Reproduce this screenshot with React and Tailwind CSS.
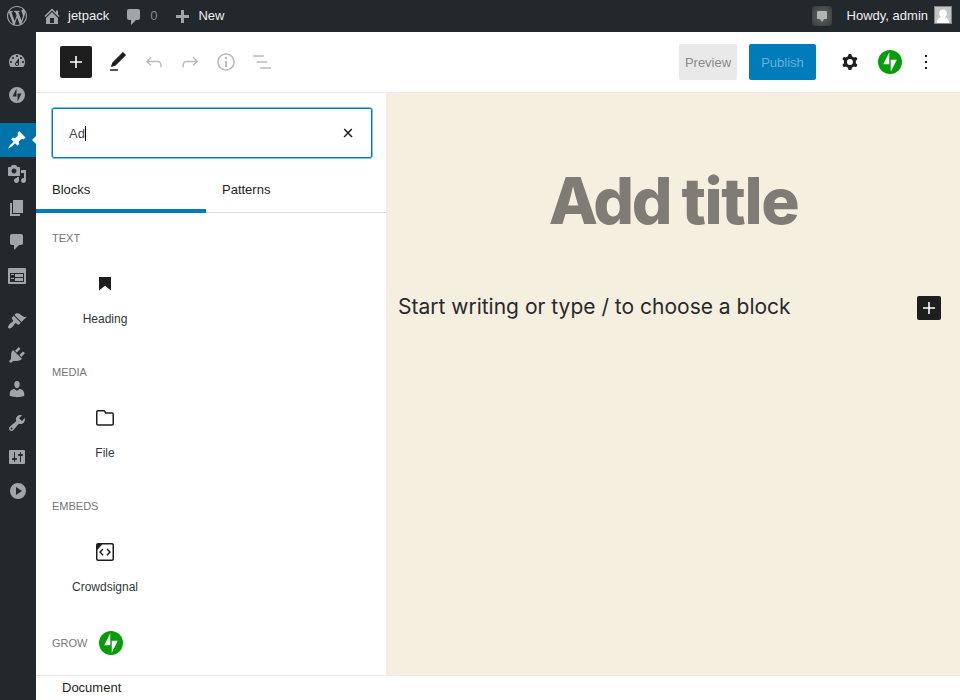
import React from "react";

const DASH = {
  wordpress:
    "M20 10c0-5.51-4.49-10-10-10C4.48 0 0 4.49 0 10c0 5.52 4.48 10 10 10 5.51 0 10-4.48 10-10zM7.78 15.37L4.37 6.22c.55-.02 1.17-.08 1.17-.08.5-.06.44-1.13-.06-1.11 0 0-1.45.11-2.37.11-.18 0-.37 0-.58-.01C4.12 2.69 6.87 1.11 10 1.11c2.33 0 4.45.87 6.05 2.34-.68-.11-1.65.39-1.65 1.58 0 .74.45 1.36.9 2.1.35.61.55 1.36.55 2.46 0 1.49-1.4 5-1.4 5l-3.03-8.37c.54-.02.82-.17.82-.17.5-.05.44-1.25-.06-1.22 0 0-1.44.12-2.38.12-.87 0-2.33-.12-2.33-.12-.5-.03-.56 1.2-.06 1.22l.92.08 1.26 3.41zM17.41 10c.24-.64.74-1.87.43-4.25.7 1.29 1.05 2.71 1.05 4.25 0 3.29-1.73 6.24-4.4 7.78.97-2.59 1.94-5.2 2.92-7.78zM6.1 18.09C3.12 16.65 1.11 13.53 1.11 10c0-1.3.23-2.48.72-3.59C3.25 10.3 4.67 14.2 6.1 18.09zm4.03-6.63l2.58 6.98c-.86.29-1.76.45-2.71.45-.79 0-1.57-.11-2.29-.33.81-2.38 1.62-4.74 2.42-7.1z",
  home: "M16 8.5l1.53 1.53-1.06 1.06L10 4.6l-6.47 6.49-1.06-1.06L10 2.5l4 4v-2h2v4zm-6-2.46l6 5.99V18H4v-5.97zM12 17v-5H8v5h4z",
  comments: "M5 2h9c1.1 0 2 .9 2 2v7c0 1.1-.9 2-2 2h-2l-5 5v-5H5c-1.1 0-2-.9-2-2V4c0-1.1.9-2 2-2z",
  plus: "M17 7v3h-5v5H9v-5H4V7h5V2h3v5h5z",
  dashboard:
    "M3.76 16h12.48c1.1-1.37 1.76-3.11 1.76-5 0-4.42-3.58-8-8-8s-8 3.58-8 8c0 1.89.66 3.63 1.76 5zM10 4c.55 0 1 .45 1 1s-.45 1-1 1-1-.45-1-1 .45-1 1-1zM6 6c.55 0 1 .45 1 1s-.45 1-1 1-1-.45-1-1 .45-1 1-1zm8 0c.55 0 1 .45 1 1s-.45 1-1 1-1-.45-1-1 .45-1 1-1zm-5.37 5.55L12 7v6c0 1.1-.9 2-2 2s-2-.9-2-2c0-.57.24-1.08.63-1.45zM4 10c.55 0 1 .45 1 1s-.45 1-1 1-1-.45-1-1 .45-1 1-1zm12 0c.55 0 1 .45 1 1s-.45 1-1 1-1-.45-1-1 .45-1 1-1zm-5 3c0-.55-.45-1-1-1s-1 .45-1 1 .45 1 1 1 1-.45 1-1z",
  jetpack: "M10 2a8 8 0 1 0 0 16 8 8 0 0 0 0-16zM9.5 11.5h-4l4-8zM10.5 16.5v-8h4z",
  post: "M10.44 3.02l1.82-1.82 6.36 6.35-1.83 1.82c-1.05-.68-2.48-.57-3.41.36l-.75.75c-.92.93-1.04 2.35-.35 3.41l-1.83 1.82-2.41-2.41-2.8 2.79c-.42.42-3.38 2.71-3.8 2.29s1.86-3.39 2.28-3.81l2.79-2.79L4.1 9.36l1.83-1.82c1.05.69 2.48.57 3.4-.36l.75-.75c.93-.92 1.05-2.35.36-3.41z",
  media:
    "M13 11V4c0-.55-.45-1-1-1h-1.67L9 1H5L3.67 3H2c-.55 0-1 .45-1 1v7c0 .55.45 1 1 1h10c.55 0 1-.45 1-1zM7 4.5c1.38 0 2.5 1.12 2.5 2.5S8.38 9.5 7 9.5 4.5 8.38 4.5 7 5.62 4.5 7 4.5zM14 6h5v10.5c0 1.38-1.12 2.5-2.5 2.5S14 17.88 14 16.5s1.12-2.5 2.5-2.5c.17 0 .34.02.5.05V9h-3V6zm-4 8.05V13h2v3.5c0 1.38-1.12 2.5-2.5 2.5S7 17.88 7 16.5 8.12 14 9.5 14c.17 0 .34.02.5.05z",
  page: "M6 15V2h10v13H6zm-1 1h8v2H3V5h2v11z",
  feedback:
    "M2 2h16c.55 0 1 .45 1 1v14c0 .55-.45 1-1 1H2c-.55 0-1-.45-1-1V3c0-.55.45-1 1-1zm15 14V7H3v9h14zM4 8v1h3V8H4zm4 0v3h8V8H8zm-4 4v1h3v-1H4zm4 0v3h8v-3H8z",
  appearance:
    "M14.48 11.06L7.41 3.99l1.5-1.5c.5-.56 2.3-.47 3.51.32 1.21.8 1.43 1.28 2.91 2.1 1.18.64 2.45 1.26 4.45.85zm-.71.71L6.7 4.7 4.93 6.47c-.39.39-.39 1.02 0 1.41l1.06 1.06c.39.39.39 1.03 0 1.42-.6.6-1.43 1.11-2.21 1.69-.35.26-.7.53-1.01.84C1.43 14.23.4 16.08 1.4 17.07c.99 1 2.84-.03 4.18-1.36.31-.31.58-.66.85-1.02.57-.78 1.08-1.61 1.69-2.21.39-.39 1.02-.39 1.41 0l1.06 1.06c.39.39 1.02.39 1.41 0z",
  plugins:
    "M13.11 4.36L9.87 7.6 8 5.73l3.24-3.24c.35-.34 1.05-.2 1.56.32.52.51.66 1.21.31 1.55zm-8 1.77l.91-1.12 9.01 9.01-1.19.84c-.71.71-2.63 1.16-3.82 1.16H6.14L4.9 17.26c-.59.59-1.54.59-2.12 0-.59-.58-.59-1.53 0-2.12l1.24-1.24v-3.88c0-1.13.4-3.19 1.09-3.89zm7.26 3.97l3.24-3.24c.34-.35 1.04-.21 1.55.31.52.51.66 1.21.31 1.55l-3.24 3.25z",
  users:
    "M10 9.25c-2.27 0-2.73-3.44-2.73-3.44C7 4.02 7.82 2 9.97 2c2.16 0 2.98 2.02 2.71 3.81 0 0-.41 3.44-2.68 3.44zm0 2.57L12.72 10c2.39 0 4.52 2.33 4.52 4.53v2.49s-3.65 1.13-7.24 1.13c-3.65 0-7.24-1.13-7.24-1.13v-2.49c0-2.25 1.94-4.48 4.47-4.48z",
  tools:
    "M16.68 9.77c-1.34 1.34-3.3 1.67-4.95.99l-5.41 6.52c-.99.99-2.59.99-3.58 0s-.99-2.59 0-3.57l6.52-5.42c-.68-1.65-.35-3.61.99-4.95 1.28-1.28 3.12-1.62 4.72-1.06l-2.89 2.89 2.82 2.82 2.86-2.87c.53 1.58.18 3.39-1.08 4.65zM3.81 16.21c.4.39 1.04.39 1.43 0 .4-.4.4-1.04 0-1.43-.39-.4-1.03-.4-1.43 0-.39.39-.39 1.03 0 1.43z",
  settings:
    "M18 16V4c0-.55-.45-1-1-1H3c-.55 0-1 .45-1 1v12c0 .55.45 1 1 1h14c.55 0 1-.45 1-1zM8 11h1c.55 0 1 .45 1 1s-.45 1-1 1H8v1.5c0 .28-.22.5-.5.5s-.5-.22-.5-.5V13H6c-.55 0-1-.45-1-1s.45-1 1-1h1V5.5c0-.28.22-.5.5-.5s.5.22.5.5V11zm5-2h-1c-.55 0-1-.45-1-1s.45-1 1-1h1V5.5c0-.28.22-.5.5-.5s.5.22.5.5V7h1c.55 0 1 .45 1 1s-.45 1-1 1h-1v5.5c0 .28-.22.5-.5.5s-.5-.22-.5-.5V9z",
  collapse: "M10 2a8 8 0 1 0 0 16 8 8 0 0 0 0-16zM8 6l6 4-6 4z",
};

const ED = {
  plus: "M18 11.2h-5.2V6h-1.6v5.2H6v1.6h5.2V18h1.6v-5.2H18z",
  edit: "M20.1 5.1L16.9 2 6.2 12.7l-1.3 4.4 4.5-1.3L20.1 5.1zM4 20.8h8v-1.5H4v1.5z",
  undo: "M18.3 11.7c-.6-.6-1.4-.9-2.3-.9H6.7l2.9-3.3-1.1-1-4.5 5L8.5 16l1-1-2.7-2.7H16c.5 0 .9.2 1.3.5 1 1 1 3.4 1 4.5v.3h1.5v-.2c0-1.5 0-4.3-1.5-5.7z",
  redo: "M15.6 6.5l-1.1 1 2.9 3.3H8c-.9 0-1.7.3-2.3.9-1.4 1.5-1.4 4.2-1.4 5.6v.2h1.5v-.3c0-1.1 0-3.5 1-4.5.3-.3.7-.5 1.3-.5h9.2L14.5 15l1.1 1.1 4.6-4.6-4.6-5z",
  info: "M12 3.2c-4.8 0-8.8 3.9-8.8 8.8 0 4.8 3.9 8.8 8.8 8.8 4.8 0 8.8-3.9 8.8-8.8 0-4.8-4-8.8-8.8-8.8zm0 16c-4 0-7.2-3.3-7.2-7.2C4.8 8 8 4.8 12 4.8s7.2 3.3 7.2 7.2c0 4-3.2 7.2-7.2 7.2zM11 17h2v-6h-2v6zm0-8h2V7h-2v2z",
  list: "M13.8 5.2H3v1.5h10.8V5.2zm-3.6 12v1.5H21v-1.5H10.2zm7.2-6H6.6v1.5h10.8v-1.5z",
  cog: "M10.289 4.836A1 1 0 0111.275 4h1.306a1 1 0 01.987.836l.244 1.466c.787.26 1.503.679 2.108 1.218l1.393-.522a1 1 0 011.216.437l.653 1.13a1 1 0 01-.23 1.273l-1.148.944a6.025 6.025 0 010 2.435l1.149.946a1 1 0 01.23 1.272l-.653 1.13a1 1 0 01-1.216.437l-1.394-.522c-.605.54-1.32.958-2.108 1.218l-.244 1.466a1 1 0 01-.987.836h-1.306a1 1 0 01-.986-.836l-.244-1.466a5.995 5.995 0 01-2.108-1.218l-1.394.522a1 1 0 01-1.217-.436l-.653-1.131a1 1 0 01.23-1.272l1.149-.946a6.026 6.026 0 010-2.435l-1.148-.944a1 1 0 01-.23-1.272l.653-1.131a1 1 0 011.217-.437l1.393.522a5.994 5.994 0 012.108-1.218l.244-1.466zM14.929 12a3 3 0 11-6 0 3 3 0 016 0z",
  more: "M13 19h-2v-2h2v2zm0-6h-2v-2h2v2zm0-6h-2V5h2v2z",
  close: "M13 11.9l3.3-3.4-1.1-1-3.2 3.3-3.2-3.3-1.1 1 3.3 3.4-3.5 3.6 1 1L12 13l3.5 3.5 1.1-1z",
  heading: "M6 5V18.5911L12 13.8473L18 18.5911V5H6Z",
  file: "M19 6.2h-5.9l-.6-1.1c-.3-.7-1-1.1-1.8-1.1H5c-1.1 0-2 .9-2 2v11.8c0 1.1.9 2 2 2h14c1.1 0 2-.9 2-2V8.2c0-1.1-.9-2-2-2zm.5 11.6c0 .3-.2.5-.5.5H5c-.3 0-.5-.2-.5-.5V6c0-.3.2-.5.5-.5h5.8c.2 0 .4.1.4.3l1 1.9H19c.3 0 .5.2.5.5v9.6z",
  embed:
    "M19 3H5c-1.1 0-2 .9-2 2v14c0 1.1.9 2 2 2h14c1.1 0 2-.9 2-2V5c0-1.1-.9-2-2-2zm.5 16c0 .3-.2.5-.5.5H5c-.3 0-.5-.2-.5-.5V9.8l4.7-5.3H19c.3 0 .5.2.5.5v14zm-6-9.5L16 12l-2.5 2.8 1.1 1L18 12l-3.5-3.5-1 1zm-3 0l-1-1L6 12l3.5 3.8 1.1-1L8 12l2.5-2.5z",
};

function Dash({ name, className = "" }) {
  return (
    <svg viewBox="0 0 20 20" className={`size-5 shrink-0 fill-current ${className}`} fillRule="evenodd">
      <path d={DASH[name]} />
    </svg>
  );
}

function Ed({ name, className = "" }) {
  return (
    <svg viewBox="0 0 24 24" className={`size-6 shrink-0 fill-current ${className}`} fillRule="evenodd">
      <path d={ED[name]} />
    </svg>
  );
}

function JetpackLogo() {
  return (
    <svg viewBox="0 0 32 32" className="size-6 shrink-0">
      <circle cx="16" cy="16" r="16" fill="#069e08" />
      <path fill="#fff" d="M15 19H7l8-16zM17 29V13h8z" />
    </svg>
  );
}

function AdminBar() {
  return (
    <header className="flex h-8 shrink-0 items-center bg-[#23282d] text-[#eee]">
      <Dash name="wordpress" className="ml-[7px] text-[#a0a5aa]" />
      <Dash name="home" className="ml-[15px] text-[#a0a5aa]" />
      <span className="ml-1.5">jetpack</span>
      <Dash name="comments" className="ml-[15px] mt-0.5 text-[#a0a5aa]" />
      <span className="ml-[6px] text-[#84898d]">0</span>
      <Dash name="plus" className="ml-[15px] mt-[3px] text-[#a0a5aa]" />
      <span className="ml-[6px]">New</span>
      <span className="ml-auto mr-[15px] flex size-5 items-center justify-center rounded-[3px] bg-[radial-gradient(circle,#6a6a6a_0%,#545454_40%,#34373a_100%)]">
        <svg viewBox="0 0 10 11" className="h-[11px] w-2.5 fill-[#b4b4b4]">
          <path d="M1 0h8a1 1 0 0 1 1 1v6a1 1 0 0 1-1 1H7l-2 3-2-3H1a1 1 0 0 1-1-1V1a1 1 0 0 1 1-1z" />
        </svg>
      </span>
      <span>Howdy, admin</span>
      <svg viewBox="0 0 18 18" className="-mt-0.5 ml-1.5 mr-2 size-[18px]">
        <path fill="#82878c" d="M0 0h18v18H0z" />
        <path fill="#c5c5c5" d="M1 1h16v16H1z" />
        <path fill="#fff" d="M9 3.5c-2.3 0-3.8 1.7-3.8 3.8 0 1.6.7 2.9 1.8 3.6C4.5 11.7 3 13.5 3 17h12c0-3.5-1.5-5.3-4-6.1 1.1-.7 1.8-2 1.8-3.6 0-2.1-1.5-3.8-3.8-3.8z" />
      </svg>
    </header>
  );
}

const MENU = [
  ["dashboard", "jetpack"],
  ["post", "media", "page", "comments", "feedback"],
  ["appearance", "plugins", "users", "tools", "settings", "collapse"],
];

function SideMenu() {
  return (
    <nav className="flex w-9 shrink-0 flex-col gap-[11px] bg-[#23282d] pt-3 text-[#a0a5aa]">
      {MENU.map((group, i) => (
        <div key={i}>
          {group.map((name) =>
            name === "post" ? (
              <div key={name} className="relative flex h-[34px] items-center bg-[#0073aa] pl-[7px] text-white">
                <Dash name={name} />
                <span className="absolute right-0 top-[13px] size-0 border-y-4 border-r-4 border-y-transparent border-r-white" />
              </div>
            ) : (
              <div key={name} className={`flex h-[34px] items-center ${name === "collapse" ? "pl-2" : "pl-[7px]"}`}>
                <Dash name={name} />
              </div>
            )
          )}
        </div>
      ))}
    </nav>
  );
}

function Toolbar() {
  return (
    <div className="flex h-[61px] shrink-0 items-center border-b border-[#e8e8e8] pl-6 pr-[22px] text-[#1e1e1e]">
      <button className="flex size-8 items-center justify-center rounded-[2px] bg-[#1e1e1e] text-white">
        <Ed name="plus" />
      </button>
      <div className="ml-3.5 flex gap-3">
        <Ed name="edit" />
        <Ed name="undo" className="text-[#bbb]" />
        <Ed name="redo" className="text-[#bbb]" />
        <Ed name="info" className="text-[#bbb]" />
        <Ed name="list" className="text-[#bbb]" />
      </div>
      <button className="ml-auto h-9 w-[58px] rounded-[2px] bg-[#e9e9e9] pt-0.5 text-[#8a8a8a]">Preview</button>
      <button className="ml-3 h-9 w-[67px] rounded-[2px] bg-[#007cba] pt-0.5 text-[#66b0d6]">Publish</button>
      <Ed name="cog" className="ml-[22px]" />
      <div className="ml-4">
        <JetpackLogo />
      </div>
      <Ed name="more" className="ml-3" />
    </div>
  );
}

function BlockGroup({ title, icon, label }) {
  return (
    <section className="h-[134px]">
      <h2 className="h-[13px] text-[11px] leading-[13px] text-[#757575]">{title}</h2>
      <div className="mt-[27px] flex w-[106px] flex-col items-center text-[#1e1e1e]">
        <Ed name={icon} />
        <span className="mt-[15px] text-xs leading-4 text-[#32373c]">{label}</span>
      </div>
    </section>
  );
}

function Inserter() {
  return (
    <aside className="flex w-[351px] shrink-0 flex-col overflow-hidden border-r border-[#eee] bg-white">
      <div className="ml-4 mt-[15px] flex h-[50px] w-80 items-center rounded-[2px] border border-[#007cba] pl-4 pr-[11px] text-[#40464d] shadow-[0_0_0_0.5px_#007cba]">
        <span className="pt-0.5">Ad</span>
        <span className="h-[15px] w-px bg-black" />
        <Ed name="close" className="ml-auto text-[#1e1e1e]" />
      </div>
      <div className="mt-[9px] flex h-[46px] shrink-0 text-[#1e1e1e]">
        <div className="flex w-[170px] items-center border-b-4 border-[#007cba] pl-4 pt-1">Blocks</div>
        <div className="flex flex-1 items-center border-b border-[#ddd] pl-4 pt-px">Patterns</div>
      </div>
      <div className="pl-4 pt-[19px]">
        <BlockGroup title="TEXT" icon="heading" label="Heading" />
        <BlockGroup title="MEDIA" icon="file" label="File" />
        <BlockGroup title="EMBEDS" icon="embed" label="Crowdsignal" />
        <div className="-mt-[3px] flex items-center gap-3 text-[11px] text-[#757575]">
          <span>GROW</span>
          <JetpackLogo />
        </div>
      </div>
    </aside>
  );
}

function Canvas() {
  return (
    <main className="flex-1 overflow-hidden bg-[#f5efe0] font-['Inter',sans-serif]">
      <h1 className="mt-[69px] text-center text-[64px] font-extrabold leading-[78px] tracking-[-2.5px] text-[#7f7c75]">
        Add <span className="tracking-[-1.4px]">title</span>
      </h1>
      <div className="mt-[53px] flex items-center justify-between pl-[11px] pr-[19px]">
        <p className="-mt-px text-[21px] leading-[30px] text-[#28292c]">Start writing or type / to choose a block</p>
        <button className="flex size-6 items-center justify-center rounded-[2px] bg-[#1e1e1e] text-white">
          <Ed name="plus" />
        </button>
      </div>
    </main>
  );
}

export default function App() {
  return (
    <div className="flex h-[700px] w-[960px] flex-col overflow-hidden bg-white font-['Liberation_Sans',Arial,sans-serif] text-[13px]">
      <AdminBar />
      <div className="flex min-h-0 flex-1">
        <SideMenu />
        <div className="flex min-w-0 flex-1 flex-col">
          <Toolbar />
          <div className="flex min-h-0 flex-1">
            <Inserter />
            <Canvas />
          </div>
          <footer className="flex h-[25px] shrink-0 items-center border-t border-[#e8e8e8] pl-[26px] text-[#1e1e1e]">Document</footer>
        </div>
      </div>
    </div>
  );
}
